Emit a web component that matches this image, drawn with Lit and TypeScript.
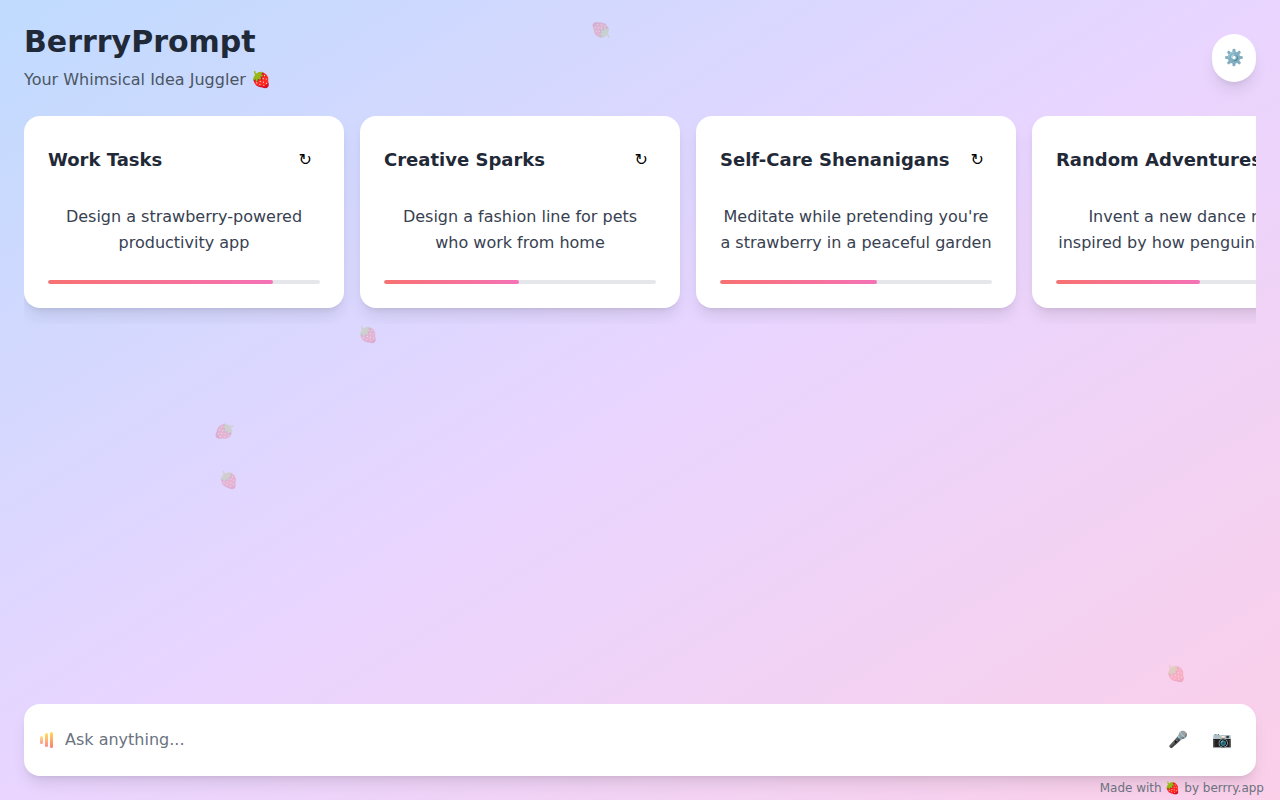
import { LitElement, html, css } from "lit";
import { customElement } from "lit/decorators.js";

interface PromptCard { title: string; text: string; progress: number; }
interface Berry { x: number; y: number; turn: number; }

const cards: PromptCard[] = [
  { title: "Work Tasks", text: "Design a strawberry-powered productivity app", progress: 82.7 },
  { title: "Creative Sparks", text: "Design a fashion line for pets who work from home", progress: 49.7 },
  { title: "Self-Care Shenanigans", text: "Meditate while pretending you're a strawberry in a peaceful garden", progress: 57.7 },
  { title: "Random Adventures", text: "Invent a new dance move inspired by how penguins waddle", progress: 53 },
];

const berries: Berry[] = [
  { x: 601, y: 30, turn: 170 },
  { x: 368, y: 335, turn: 0 },
  { x: 224, y: 431, turn: 95 },
  { x: 229, y: 480, turn: 8 },
  { x: 1176, y: 674, turn: 0 },
];

@customElement("app-root")
export class AppRoot extends LitElement {
  static styles = css`
    :host {
      display: block;
      font-family: "DejaVu Sans", sans-serif;
      font-size: 16px;
      line-height: 24px;
      color: #1f2937;
    }
    * { box-sizing: border-box; margin: 0; }
    button { border: 0; padding: 0; background: none; font: inherit; color: #000; cursor: pointer; }
    .page {
      position: relative;
      min-height: 100vh;
      padding: 24px;
      display: flex;
      flex-direction: column;
      overflow: hidden;
      background: linear-gradient(to bottom right, #bfdbfe, #e9d5ff, #fbcfe8);
    }
    .berry { position: absolute; opacity: 0.2; line-height: 24px; pointer-events: none; }
    header { display: flex; justify-content: space-between; align-items: center; margin-bottom: 24px; }
    h1 { font-size: 30px; line-height: 36px; font-weight: 700; }
    .tagline { color: #4b5563; margin-top: 8px; }
    .settings {
      padding: 12px;
      border-radius: 9999px;
      background: #fff;
      box-shadow: 0 10px 15px -3px rgba(0,0,0,.1), 0 4px 6px -4px rgba(0,0,0,.1);
    }
    .cards { display: flex; gap: 16px; overflow-x: auto; scrollbar-width: none; padding-bottom: 16px; }
    .card {
      flex: 0 0 320px;
      padding: 24px;
      border-radius: 16px;
      background: #fff;
      box-shadow: 0 10px 15px -3px rgba(0,0,0,.1), 0 4px 6px -4px rgba(0,0,0,.1);
    }
    .head { display: flex; justify-content: space-between; align-items: center; margin-bottom: 16px; }
    h2 { font-size: 18px; line-height: 28px; font-weight: 700; white-space: nowrap; }
    .refresh { padding: 8px; }
    .text {
      min-height: 68px;
      margin-bottom: 16px;
      display: flex;
      align-items: center;
      justify-content: center;
      text-align: center;
      line-height: 26px;
      color: #374151;
    }
    .track { height: 4px; border-radius: 2px; background: #e5e7eb; overflow: hidden; }
    .bar { height: 100%; border-radius: 2px; background: linear-gradient(to right, #f87171, #f472b6); }
    .ask {
      margin-top: auto;
      display: flex;
      align-items: center;
      padding: 16px;
      border-radius: 16px;
      background: #fff;
      box-shadow: 0 10px 15px -3px rgba(0,0,0,.1), 0 4px 6px -4px rgba(0,0,0,.1);
    }
    .wave { flex: none; display: flex; align-items: center; gap: 2px; margin-right: 12px; }
    .wave span { width: 3px; border-radius: 2px; background: linear-gradient(#ffd93d, #ff6b6b); }
    .wave .low { height: 8px; opacity: 0.7; }
    .wave .mid { height: 14px; opacity: 0.8; }
    .wave .high { height: 16px; opacity: 0.9; }
    input { flex: 1; min-width: 0; border: 0; padding: 0; outline: 0; background: none; font: inherit; color: inherit; }
    input::placeholder { color: #6b7280; opacity: 1; }
    .tool { padding: 8px; margin-left: 8px; }
    .credit { position: absolute; right: 16px; bottom: 4px; font-size: 12px; line-height: 16px; color: #6b7280; }
  `;

  render() {
    return html`
      <main class="page">
        ${berries.map((b) => html`<span class="berry" aria-hidden="true"
          style="left:${b.x - 10}px;top:${b.y - 12}px;transform:rotate(${b.turn}deg)">🍓</span>`)}
        <header>
          <div>
            <h1>BerrryPrompt</h1>
            <p class="tagline">Your Whimsical Idea Juggler 🍓</p>
          </div>
          <button class="settings" aria-label="Settings">⚙️</button>
        </header>
        <section class="cards">
          ${cards.map((c) => html`
            <article class="card">
              <div class="head">
                <h2>${c.title}</h2>
                <button class="refresh" aria-label="Refresh ${c.title}">↻</button>
              </div>
              <p class="text">${c.text}</p>
              <div class="track"><div class="bar" style="width:${c.progress}%"></div></div>
            </article>`)}
        </section>
        <form class="ask" @submit=${(e: Event) => e.preventDefault()}>
          <div class="wave" aria-hidden="true">
            <span class="low"></span><span class="mid"></span><span class="high"></span>
          </div>
          <input type="text" placeholder="Ask anything..." aria-label="Ask anything" />
          <button class="tool" type="button" aria-label="Voice input">🎤</button>
          <button class="tool" type="button" aria-label="Add photo">📷</button>
        </form>
        <div class="credit">Made with 🍓 by berrry.app</div>
      </main>`;
  }
}
